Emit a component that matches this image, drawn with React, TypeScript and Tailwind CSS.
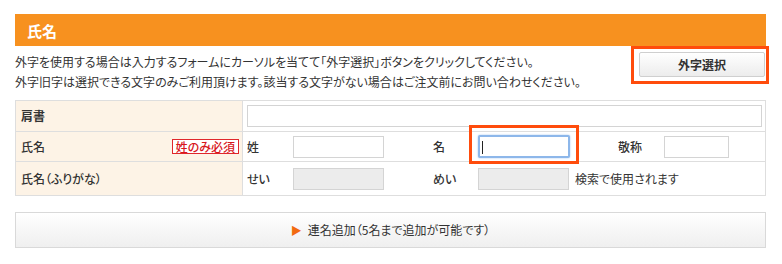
export default function App() {
  return (
    <div className="w-[782px] h-[264px] bg-white px-[15px] pt-[14px] text-[#333] font-['Noto_Sans_CJK_JP','Noto_Sans',sans-serif] [font-feature-settings:'palt']">
      <div className="w-[751px]">
        {/* 見出し */}
        <div className="h-[32px] bg-[#f7911f] flex items-center pl-[12px]">
          <h2 className="text-white text-[15px] font-bold leading-none">氏名</h2>
        </div>

        {/* 説明文 + 外字選択 */}
        <div className="relative flex items-start h-[54px]">
          <div className="pt-[6px] text-[12px] leading-[20px]">
            <p>外字を使用する場合は入力するフォームにカーソルを当てて「外字選択」ボタンをクリックしてください。</p>
            <p>外字旧字は選択できる文字のみご利用頂けます。該当する文字がない場合はご注文前にお問い合わせください。</p>
          </div>
          <button className="absolute left-[624px] top-[6px] w-[126px] h-[25px] border border-[#cfcfcf] rounded-[2px] bg-gradient-to-b from-white to-[#ececec] text-[12px] font-bold text-[#333]">
            外字選択
          </button>
          <div className="absolute left-[616px] top-0 w-[138px] h-[38px] border-[3px] border-[#ff4c0c] pointer-events-none" />
        </div>

        {/* フォーム表 */}
        <div className="border border-[#dedede] text-[12px]">
          <div className="flex h-[31px] border-b border-[#dedede]">
            <div className="w-[227px] bg-[#fdf3e6] border-r border-[#dedede] flex items-center pl-[5px] font-bold">肩書</div>
            <div className="flex-1 flex items-center pl-[4px] pr-[3px]">
              <input className="w-full h-[22px] border border-[#d4d4d4] bg-white outline-none" />
            </div>
          </div>

          <div className="flex h-[30px] border-b border-[#dedede]">
            <div className="w-[227px] bg-[#fdf3e6] border-r border-[#dedede] flex items-center justify-between pl-[5px] pr-[3px]">
              <span className="font-medium">氏名</span>
              <span className="h-[15px] px-[3px] border border-[#e0262b] bg-white text-[#d8161c] text-[12px] leading-[13px] font-medium flex items-center">姓のみ必須</span>
            </div>
            <div className="flex-1 flex items-center pl-[4px]">
              <span className="w-[46px] font-medium">姓</span>
              <input className="w-[91px] h-[22px] border border-[#d4d4d4] bg-white outline-none" />
              <span className="w-[49px]" />
              <span className="w-[45px] font-medium">名</span>
              <div className="relative w-[92px] h-[23px] border-2 border-[#8db7ea] rounded-[2px] shadow-[0_0_2px_#9cc2f0] bg-white">
                <span className="absolute left-[2px] top-[4px] w-px h-[13px] bg-[#222]" />
                <div className="absolute -left-[11px] -top-[12px] w-[110px] h-[39px] border-[3px] border-[#ff4c0c]" />
              </div>
              <span className="w-[48px]" />
              <span className="w-[46px] font-medium">敬称</span>
              <input className="w-[65px] h-[22px] border border-[#d4d4d4] bg-white outline-none" />
            </div>
          </div>

          <div className="flex h-[33px]">
            <div className="w-[227px] bg-[#fdf3e6] border-r border-[#dedede] flex items-center pl-[5px] font-medium">氏名（ふりがな）</div>
            <div className="flex-1 flex items-center pl-[4px]">
              <span className="w-[46px] font-medium">せい</span>
              <input disabled className="w-[91px] h-[22px] border border-[#d4d4d4] bg-[#ececec]" />
              <span className="w-[49px]" />
              <span className="w-[45px] font-medium">めい</span>
              <input disabled className="w-[91px] h-[22px] border border-[#d4d4d4] bg-[#ececec]" />
              <span className="pl-[6px]">検索で使用されます</span>
            </div>
          </div>
        </div>

        {/* 連名追加 */}
        <button className="mt-[16px] w-full h-[36px] border border-[#d9d9d9] bg-gradient-to-b from-white to-[#efefef] flex items-center justify-center gap-[6px] text-[12px] text-[#333]">
          <span className="text-[#f26a10] text-[11px] leading-none">▶</span>
          <span>連名追加（5名まで追加が可能です）</span>
        </button>
      </div>
    </div>
  );
}
